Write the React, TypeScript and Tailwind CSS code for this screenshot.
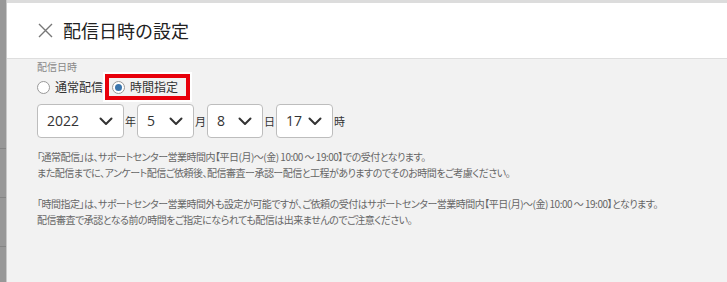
import React from "react";

const font = { fontFamily: '"Noto Sans CJK JP", "Noto Sans", sans-serif' };

function Chevron() {
  return (
    <svg width="14" height="9" viewBox="0 0 14 9" fill="none">
      <path d="M1.5 1.5 L7 7 L12.5 1.5" stroke="#333" strokeWidth="2" strokeLinecap="round" strokeLinejoin="round" />
    </svg>
  );
}

function Select({ value, w }: { value: string; w: string }) {
  return (
    <div className={`${w} h-[34px] bg-white border border-[#bdbdbd] rounded-[4px] flex items-center justify-between pl-[9px] pr-[10px]`}>
      <span className="text-[14px] text-[#333] leading-none" style={{ fontFamily: '"Open Sans", "Noto Sans", sans-serif' }}>{value}</span>
      <Chevron />
    </div>
  );
}

export default function App() {
  return (
    <div className="w-[727px] h-[282px] flex bg-[#f2f2f2] overflow-hidden" style={font}>
      <div className="w-[7px] shrink-0 bg-[#989898] border-r border-[#c8c8c8] flex flex-col">
        <div className="h-[149px] border-b border-[#858585]" />
        <div className="h-[49px] border-b border-[#858585]" />
        <div className="h-[49px] border-b border-[#858585]" />
      </div>
      <div className="flex-1 flex flex-col">
        <div className="h-[3px] bg-[#dcdcdc]" />
        <div className="h-[56px] bg-white border-b border-[#dedede] flex items-center pl-[31px]">
          <svg width="15" height="15" viewBox="0 0 15 15" className="mr-[10px]">
            <path d="M1 1 L14 14 M14 1 L1 14" stroke="#777" strokeWidth="1.4" />
          </svg>
          <span className="text-[18px] text-[#222] leading-none -mt-[2px]">配信日時の設定</span>
        </div>
        <div className="pl-[30px] pt-[1px]">
          <div className="text-[10px] text-[#888] leading-[14px] h-[14px]">配信日時</div>
          <div className="flex items-center -mt-[2px] h-[30px]">
            <div className="flex items-center">
              <span className="w-[13px] h-[13px] rounded-full border border-[#999] bg-white" />
              <span className="ml-[5px] text-[12px] text-[#333]">通常配信</span>
            </div>
            <div className="border-2 border-white">
              <div className="border-[4px] border-[#e8000b] flex items-center pl-[3px] pr-[8px] h-[26px]">
                <span className="w-[13px] h-[13px] rounded-full border border-[#999] bg-white flex items-center justify-center">
                  <span className="w-[7px] h-[7px] rounded-full bg-[#3b76ad]" />
                </span>
                <span className="ml-[5px] text-[12px] text-[#333]">時間指定</span>
              </div>
            </div>
          </div>
          <div className="flex items-center mt-[2px] text-[11px] text-[#333]">
            <Select value="2022" w="w-[87px]" />
            <span className="mx-[1px]">年</span>
            <Select value="5" w="w-[57px]" />
            <span className="mx-[1px]">月</span>
            <Select value="8" w="w-[56px]" />
            <span className="mx-[1px]">日</span>
            <Select value="17" w="w-[57px]" />
            <span className="mx-[1px]">時</span>
          </div>
          <div className="mt-[11px] text-[10px] text-[#666] leading-[16px] tracking-[-0.5px] [font-feature-settings:'palt']">
            <p>「通常配信」は、サポートセンター営業時間内【平日(月)〜(金) 10:00 〜 19:00】での受付となります。</p>
            <p>また配信までに、アンケート配信ご依頼後、配信審査ー承認ー配信と工程がありますのでそのお時間をご考慮ください。</p>
            <p className="mt-[15px]">「時間指定」は、サポートセンター営業時間外も設定が可能ですが、ご依頼の受付はサポートセンター営業時間内【平日(月)〜(金) 10:00 〜 19:00】となります。</p>
            <p>配信審査で承認となる前の時間をご指定になられても配信は出来ませんのでご注意ください。</p>
          </div>
        </div>
      </div>
    </div>
  );
}
